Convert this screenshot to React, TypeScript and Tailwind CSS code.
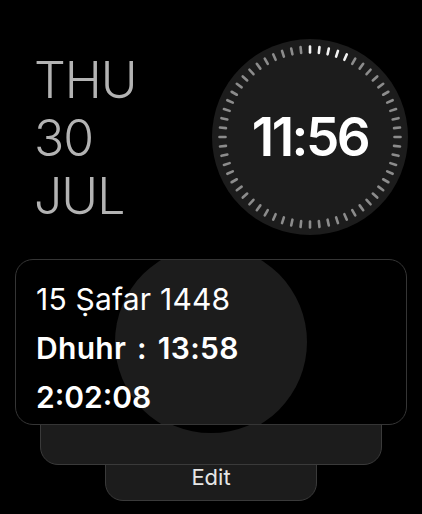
const ticks = Array.from({ length: 60 }, (_, i) => i);

function ClockFace() {
  return (
    <div className="relative flex h-[196px] w-[196px] items-center justify-center rounded-full bg-[#1c1c1c]">
      <svg className="absolute inset-0" width="196" height="196" viewBox="0 0 196 196">
        {ticks.map((i) => (
          <line
            key={i}
            x1="98"
            y1="7.5"
            x2="98"
            y2="13.5"
            stroke={i < 5 ? "#f2f2f2" : "#8c8c8c"}
            strokeWidth="2.6"
            strokeLinecap="round"
            transform={`rotate(${i * 6} 98 98)`}
          />
        ))}
      </svg>
      <span className="relative text-[53px] font-semibold leading-none tracking-[-2.5px] text-white">
        11:56
      </span>
    </div>
  );
}

export default function App() {
  return (
    <div className="h-[514px] w-[422px] overflow-hidden bg-black font-['Inter',sans-serif]">
      <div className="flex">
        <div className="pl-[34px] pt-[51px] text-[50px] font-light leading-[58px] tracking-[-1px] text-[#b3b3b3]">
          <div>THU</div>
          <div>30</div>
          <div>JUL</div>
        </div>
        <div className="ml-auto mr-[14px] mt-[39px]">
          <ClockFace />
        </div>
      </div>

      <div className="mt-[24px] flex flex-col items-center">
        <div className="relative z-30 h-[166px] w-[392px] overflow-hidden rounded-[18px] border border-[#353535] bg-black">
          <div className="absolute left-[99px] top-[-14px] h-[192px] w-[192px] rounded-full bg-[#1c1c1c]" />
          <div className="relative flex flex-col gap-[11px] px-[20px] pt-[20px] text-[30px] leading-[38px] text-white">
            <div className="tracking-[0.2px]">15 Ṣafar 1448</div>
            <div className="font-semibold tracking-[0.3px] [word-spacing:3px]">Dhuhr : 13:58</div>
            <div className="font-semibold">2:02:08</div>
          </div>
        </div>
        <div className="relative z-20 mt-[-30px] h-[70px] w-[342px] overflow-hidden rounded-b-[18px] border border-[#3a3a3a] bg-[#1c1c1c]">
          <div className="absolute left-[74px] top-[-155px] h-[192px] w-[192px] rounded-full bg-black" />
        </div>
        <div className="relative z-10 mt-[-18px] flex h-[54px] w-[212px] items-end justify-center rounded-b-[18px] border border-[#3a3a3a] bg-[#1c1c1c] pb-[12px] text-[22px] leading-none text-[#e6e6e6]">
          Edit
        </div>
      </div>
    </div>
  );
}
